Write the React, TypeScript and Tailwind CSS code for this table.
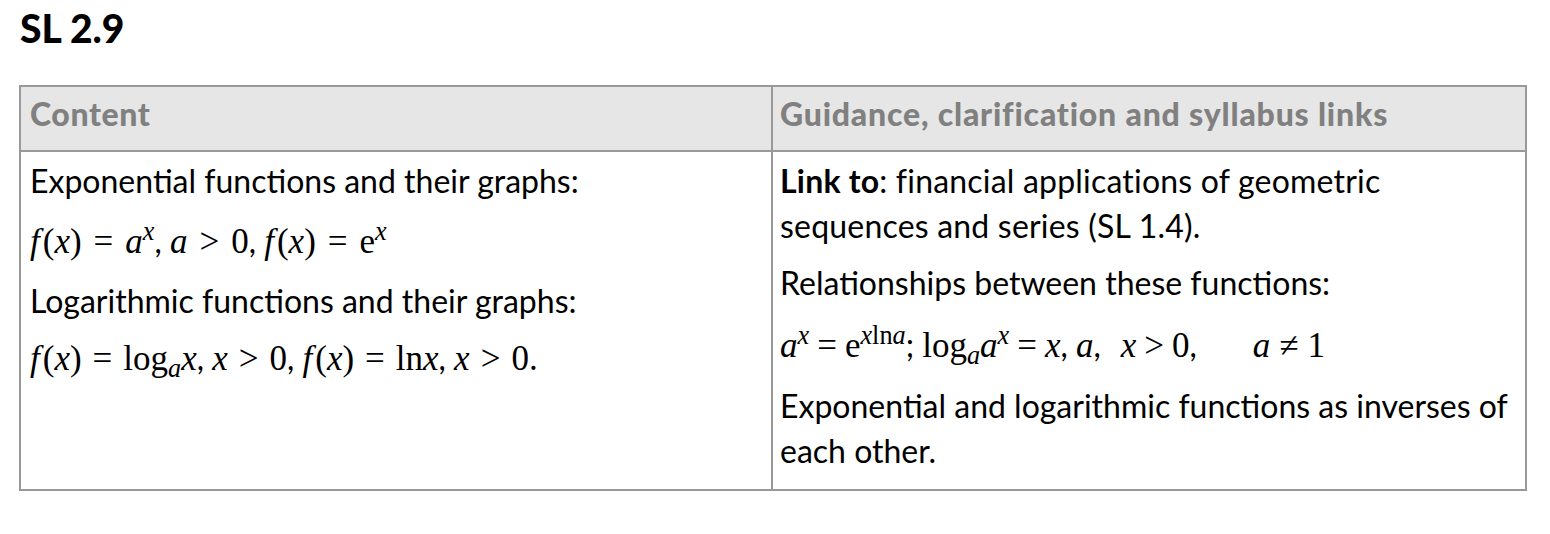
import React from "react";

const S = ({ children }: { children: React.ReactNode }) => (
  <span className="[font-family:Lato,sans-serif] not-italic text-[32px]">{children}</span>
);
const I = ({ children }: { children: React.ReactNode }) => <i className="italic">{children}</i>;
const F = () => <i className="italic mr-[3px]">f</i>;
const Op = ({ children }: { children: React.ReactNode }) => (
  <span className="mx-[12px]">{children}</span>
);
const Op2 = ({ children }: { children: React.ReactNode }) => (
  <span className="mx-[11px]">{children}</span>
);
const OpS = ({ children }: { children: React.ReactNode }) => (
  <span className="mx-[8px]">{children}</span>
);

export default function App() {
  return (
    <div className="w-[1550px] h-[534px] bg-white text-black px-[19px] pt-[9px] [font-family:Lato,sans-serif]">
      <h1 className="text-[39px] leading-[39px] font-black pl-[1px]">SL 2.9</h1>
      <div className="mt-[37px] w-[1508px] border-2 border-[#999] grid grid-cols-2">
        <div className="bg-[#e6e6e6] border-r-2 border-b-2 border-[#999] h-[65px] pl-[9px] pb-[9px] flex items-center">
          <span className="text-[32px] font-black text-[#808080] tracking-[0.6px]">Content</span>
        </div>
        <div className="bg-[#e6e6e6] border-b-2 border-[#999] h-[65px] pl-[7px] pb-[9px] flex items-center">
          <span className="text-[32px] font-black text-[#808080] tracking-[0.8px]">Guidance, clarification and syllabus links</span>
        </div>
        <div className="border-r-2 border-[#999] pl-[9px] pt-[6px] pb-[16px] text-[32px] leading-[45px] flex flex-col gap-[12px]">
          <p>Exponential functions and their graphs:</p>
          <p className="[font-family:'Liberation_Serif',serif] text-[35px] leading-[51px]">
            <F />(<I>x</I>)<Op>=</Op><I>a</I>
            <sup><I>x</I></sup>
            <S>, </S>
            <I>a</I>
            <Op>&gt;</Op>0<S>, </S>
            <F />(<I>x</I>)<Op>=</Op>e<sup><I>x</I></sup>
          </p>
          <p className="-mt-[1px]">Logarithmic functions and their graphs:</p>
          <p className="[font-family:'Liberation_Serif',serif] text-[35px] leading-[45px]">
            <F />(<I>x</I>)<Op2>=</Op2>log<sub><I>a</I></sub>
            <I>x</I>
            <S>, </S>
            <I>x</I>
            <Op2>&gt;</Op2>0<S>, </S>
            <F />(<I>x</I>)<Op2>=</Op2>ln<I>x</I>
            <S>, </S>
            <I>x</I>
            <Op2>&gt;</Op2>0.
          </p>
        </div>
        <div className="pl-[7px] pt-[6px] pb-[16px] text-[32px] leading-[45px] flex flex-col gap-[12px]">
          <p className="tracking-[0.2px]">
            <b className="font-bold">Link to</b>: financial applications of geometric sequences and series (SL 1.4).
          </p>
          <p>Relationships between these functions:</p>
          <p className="[font-family:'Liberation_Serif',serif] text-[35px] leading-[52px] mt-[2px]">
            <I>a</I>
            <sup><I>x</I></sup>
            <OpS>=</OpS>e
            <sup>
              <I>x</I>ln<I>a</I>
            </sup>
            <S>; </S>
            log<sub><I>a</I></sub>
            <I>a</I>
            <sup><I>x</I></sup>
            <OpS>=</OpS>
            <I>x</I>
            <S>, </S>
            <I>a</I>
            <S>,</S>
            <span className="inline-block w-[20px]"></span>
            <I>x</I>
            <OpS>&gt;</OpS>0<S>,</S>
            <span className="inline-block w-[56px]"></span>
            <I>a</I>
            <span className="mx-[9px]">≠</span>1
          </p>
          <p className="-mt-[1px]">Exponential and logarithmic functions as inverses of each other.</p>
        </div>
      </div>
    </div>
  );
}
